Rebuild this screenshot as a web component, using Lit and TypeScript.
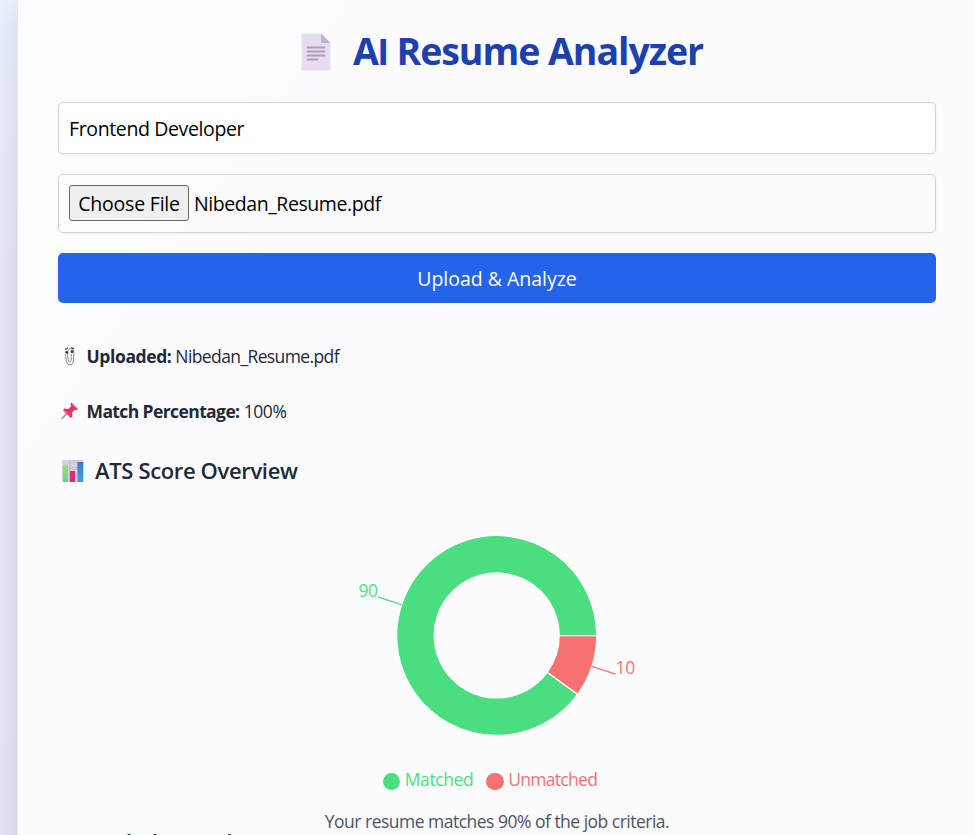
import { LitElement, html, css, svg } from "lit";
import { customElement } from "lit/decorators.js";

const SLICES = [
  { name: "Matched", value: 90, color: "#4ade80" },
  { name: "Unmatched", value: 10, color: "#f87171" },
];

@customElement("score-donut")
class ScoreDonut extends LitElement {
  static styles = css`
    :host { display: block; }
    svg { display: block; width: 878px; height: 250px; }
    text { font-family: "Open Sans", "Noto Sans", sans-serif; font-size: 17.5px; letter-spacing: -0.3px; }
  `;

  render() {
    const cx = 438.7, cy = 125.5, outer = 100, inner = 62.5;
    const point = (r: number, deg: number) => {
      const a = (-deg * Math.PI) / 180;
      return [cx + r * Math.cos(a), cy + r * Math.sin(a)];
    };
    let start = 0;
    const parts = SLICES.map((s) => {
      const end = start + s.value * 3.6;
      const mid = (start + end) / 2;
      const large = s.value > 50 ? 1 : 0;
      const d = `M${point(outer, start)}A${outer},${outer} 0 ${large} 0 ${point(outer, end)}L${point(inner, end)}A${inner},${inner} 0 ${large} 1 ${point(inner, start)}Z`;
      const a = point(outer, mid);
      const b = point(outer + 25, mid);
      start = end;
      return svg`
        <path d=${d} fill=${s.color} stroke="#fff" stroke-width="1.25"></path>
        <path d=${`M${a}L${b}`} stroke=${s.color} stroke-width="1.25"></path>
        <text x=${b[0]} y=${b[1]} fill=${s.color} text-anchor=${b[0] > cx ? "start" : "end"}>${s.value}</text>`;
    });
    return html`<svg viewBox="0 0 878 250">${parts}</svg>`;
  }
}

@customElement("app-root")
class AppRoot extends LitElement {
  static styles = css`
    :host {
      display: block; box-sizing: border-box; height: 835px; overflow: hidden;
      padding-left: 17px;
      background: linear-gradient(180deg, #eaf0fc, #e7e8f6 35%, #e6e5f4);
      font-family: "Open Sans", "Noto Sans", sans-serif; color: #1f2937;
    }
    * { box-sizing: border-box; }
    .card {
      height: 900px; padding: 22px 39px 0 40px; border-left: 1px solid #e5e5ee;
      background: linear-gradient(125deg, #fbfdff, #fcfcff 28%, #fcfcfe);
      box-shadow: 0 10px 28px rgba(30, 30, 70, 0.12);
    }
    h1 {
      display: flex; justify-content: center; align-items: center; margin: 0; height: 60px; padding-left: 10px;
      font-size: 37.5px; font-weight: 700; color: #1e40af; letter-spacing: -1.05px;
    }
    h1 svg { width: 30px; height: 38px; margin-right: 22px; }
    .title { padding-bottom: 3px; }
    .stem { font-family: Roboto, sans-serif; }
    .field {
      display: flex; align-items: center; width: 878px; height: 52px; margin-top: 20px; padding: 0 10px;
      border: 1px solid #d1d5db; border-radius: 5px; background: #fff; color: #000;
      box-shadow: 0 1px 2px rgba(0, 0, 0, 0.05); font-size: 19.5px; letter-spacing: -0.37px;
    }
    .file { height: 59px; background: transparent; margin-top: 20px; }
    .name { letter-spacing: -0.43px; }
    .choose {
      display: flex; align-items: center; justify-content: center; width: 120px; height: 36px; margin: 0 5px 1px 0;
      border: 1px solid #6b6b6b; border-radius: 3px; background: #efefef; letter-spacing: -0.2px;
    }
    .submit {
      display: flex; align-items: center; justify-content: center; width: 878px; height: 50px; margin-top: 20px;
      border-radius: 5px; background: #2563eb; color: #fff; font-size: 19.5px; font-weight: 500; letter-spacing: -0.02px;
    }
    .row { display: flex; align-items: center; height: 28px; font-size: 17.5px; letter-spacing: -0.61px; white-space: pre; }
    .row svg { width: 24px; height: 20px; margin-right: 4.5px; }
    .row b { letter-spacing: -0.4px; }
    .row .percent { letter-spacing: -0.4px; }
    .uploaded { margin-top: 39px; }
    .match { margin-top: 27px; }
    .match b { letter-spacing: -0.6px; }
    h2 { display: flex; align-items: center; margin: 28px 0 0; height: 34px; font-size: 22px; font-weight: 600; letter-spacing: -0.35px; }
    h2 svg { width: 24px; height: 24px; margin: 2px 10px 0 3px; }
    score-donut { margin-top: 23px; }
    .legend { display: flex; justify-content: center; align-items: center; height: 26px; margin-top: 6px; padding-right: 14px; font-size: 17.5px; letter-spacing: -0.42px; }
    .legend span { display: flex; align-items: center; margin: 0 6.5px; }
    .legend i { width: 17.5px; height: 17.5px; margin: 5px 4.5px 0 0; border-radius: 50%; background: currentColor; }
    .matched { color: #4ade80; }
    .unmatched { color: #f87171; letter-spacing: -0.7px; }
    .note { margin: 15px 0 0; height: 28px; line-height: 28px; text-align: center; font-size: 17.5px; color: #4b5563; letter-spacing: -0.51px; }
    .keywords { margin: -8px 0 0 28px; height: 28px; line-height: 28px; font-size: 17.5px; font-weight: 700; letter-spacing: -0.85px; }
  `;

  render() {
    return html`
      <div class="card">
        <h1>
          <svg viewBox="0 0 30 38">
            <path d="M.5 .5h19.500l9.500 9.500V37.500H.5z" fill="#e7dcf0"></path>
            <path d="M20 .5l9.500 9.500h-9.500z" fill="#bdb6c3"></path>
            <path d="M6.500 14.500h17M6.500 18.500h17M6.500 22.500h17M6.500 26.500h10" stroke="#aaa0b2" stroke-width="1.8" stroke-linecap="round"></path>
          </svg>
          <span class="title">A<span class="stem">I</span> Resume Analyzer</span>
        </h1>
        <div class="field job"><span>Frontend Developer</span></div>
        <div class="field file"><span class="choose">Choose File</span><span class="name">Nibedan_Resume.pdf</span></div>
        <div class="submit"><span>Upload &amp; Analyze</span></div>
        <div class="row uploaded">
          <svg viewBox="0 0 24 20" fill="none">
            <path d="M7.500 8l.8 7q.5 4 3.700 4t3.500-4l.3-9q-.3-3.500-3-3.500T9.500 6l.7 8q.2 2 1.500 2t1.500-2V8" stroke="#929292" stroke-width="1"></path>
            <path d="M7 3.500l3-1.800M13 1.700l3 1" stroke="#4b3a3e" stroke-width="1.300"></path>
            <circle cx="8.800" cy="6.300" r="1.400" fill="#3c2a2e"></circle><circle cx="14" cy="5.700" r="1.400" fill="#3c2a2e"></circle>
          </svg><b>Uploaded:</b><span> Nibedan_Resume.pdf</span>
        </div>
        <div class="row match">
          <svg viewBox="0 0 24 20">
            <path d="M3.500 18l7-7" stroke="#9b8fa5" stroke-width="1.500"></path>
            <path d="M13.500 1.500l6.500 6.500-1.800 1.200-1.700-.4-2.500 3 .5 4-1.700 1.200L5 9.200l1.500-1.700 4 .5 2.700-2.700-.9-2.200z" fill="#e9315f"></path>
            <path d="M13.700 3l5 5M6.500 9l6 6" stroke="#ff6b8d" stroke-width=".9"></path>
          </svg><b>Match Percentage:</b><span class="percent"> 100%</span>
        </div>
        <h2>
          <svg viewBox="0 0 24 24">
            <defs>
              <linearGradient id="g" x2="0" y2="1"><stop stop-color="#a5e05f"></stop><stop offset="1" stop-color="#5fd59a"></stop></linearGradient>
              <linearGradient id="b" x2="0" y2="1"><stop stop-color="#2a7fd0"></stop><stop offset="1" stop-color="#4a9bf0"></stop></linearGradient>
            </defs>
            <rect x="1" y="1" width="22" height="22" rx="1.500" fill="#d8d0df"></rect>
            <path d="M1 8.500h22M1 16h22M8.500 1v22M16 1v22" stroke="#c2b8ca" stroke-width=".8"></path>
            <path d="M2 6h5v17H2z" fill="url(#g)"></path><path d="M9 12h5v11H9z" fill="#d92c70"></path><path d="M16.500 3h5.500v20h-5.500z" fill="url(#b)"></path>
          </svg>
          <span>ATS Score Overview</span>
        </h2>
        <score-donut></score-donut>
        <div class="legend"><span class="matched"><i></i>Matched</span><span class="unmatched"><i></i>Unmatched</span></div>
        <p class="note">Your resume matches 90% of the job criteria.</p>
        <div class="keywords">Matched Keywords:</div>
      </div>
    `;
  }
}
